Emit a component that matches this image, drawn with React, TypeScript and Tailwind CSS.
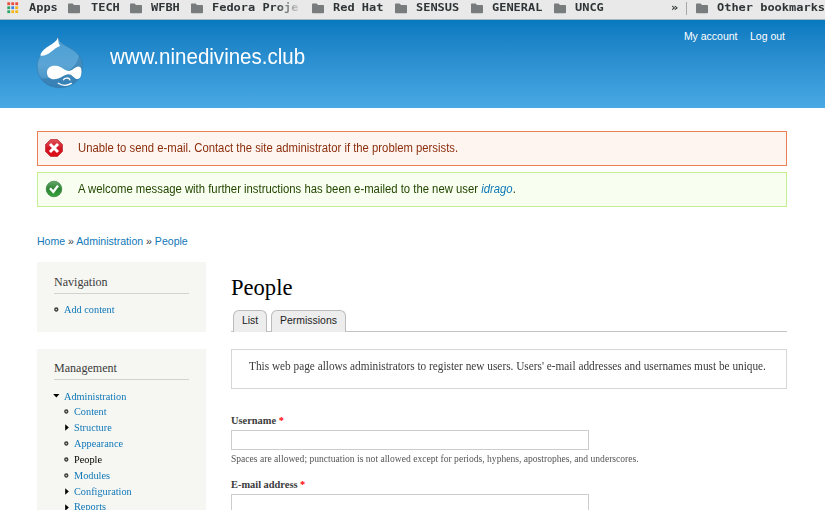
import type { ReactNode } from "react";

const SANS = "font-['Liberation_Sans',Arial,sans-serif]";
const LINK = "text-[#0f78b8]";

function Folder() {
  return (
    <svg className="block h-[11px] w-3 shrink-0" viewBox="0 0 12 11">
      <path d="M0 1.2Q0 .4 .8 .4H4.6L6 1.9H11.2Q12 1.9 12 2.7V9.5Q12 10.3 11.2 10.3H.8Q0 10.3 0 9.5Z" fill="#797c7c" />
    </svg>
  );
}

function PixelText({ children }: { children: ReactNode }) {
  return (
    <span className="block w-max origin-left scale-x-[1.235] whitespace-pre font-['DejaVu_Sans_Mono',monospace] text-[9.7px] leading-[15px] font-bold text-[#2f3536]">
      {children}
    </span>
  );
}

const bookmarks = [
  { name: "TECH", width: "w-[62px]", gap: "gap-[11px]" },
  { name: "WFBH", width: "w-[61px]", gap: "gap-[9px]" },
  { name: "Fedora Proje", width: "w-[121px]", gap: "gap-[9px]", fade: true },
  { name: "Red Hat", width: "w-[83px]", gap: "gap-[9px]" },
  { name: "SENSUS", width: "w-[76px]", gap: "gap-[9px]" },
  { name: "GENERAL", width: "w-[83px]", gap: "gap-[9px]" },
  { name: "UNCG", width: "w-[117px]", gap: "gap-[9px]" },
];

function AppsGrid() {
  const colors = ["#e94b3c", "#e94b3c", "#e94b3c", "#2fa366", "#3b82e8", "#f4b619", "#2fa366", "#f4b619", "#f4b619"];
  return (
    <svg className="block h-3 w-[12px]" viewBox="0 0 12 12">
      {colors.map((c, i) => (
        <rect key={i} x={(i % 3) * 4 + 0.3} y={Math.floor(i / 3) * 4 + 0.3} width="2.8" height="2.8" fill={c} />
      ))}
    </svg>
  );
}

function BookmarkBar() {
  return (
    <div className="flex h-5 w-[825px] items-start overflow-hidden border-b border-[#a9b9c0] bg-[#e9e9e9]">
      <div className="flex w-[68px] shrink-0 gap-[9.5px] pl-[7px]">
        <div className="pt-[2px]"><AppsGrid /></div>
        <PixelText>Apps</PixelText>
      </div>
      {bookmarks.map((b) => (
        <div key={b.name} className={`flex shrink-0 ${b.width} ${b.gap}`}>
          <div className="pt-[3px]"><Folder /></div>
          <div className={b.fade ? "w-[90px] [mask-image:linear-gradient(to_right,black_64px,transparent_90px)]" : ""}>
            <PixelText>{b.name}</PixelText>
          </div>
        </div>
      ))}
      <div className="w-[15px] shrink-0"><PixelText>»</PixelText></div>
      <div className="mt-[2px] mr-[9px] h-[13px] w-px shrink-0 bg-[#a5a8a8]" />
      <div className="flex shrink-0 gap-[9px]">
        <div className="pt-[3px]"><Folder /></div>
        <PixelText>Other bookmarks</PixelText>
      </div>
    </div>
  );
}

function Druplicon() {
  const body =
    "M22 1C22.500 6 28 9 34 12C42 16.500 46.500 22.500 46.500 30.500C46.500 43 37 51.700 24 51.700C11 51.700 1.200 43 1.200 30.500C1.200 21 7 15 14 10.800C19 8 21.500 5 22 1Z";
  return (
    <svg className="block h-[53px] w-[48px]" viewBox="0 0 48 53">
      <defs>
        <linearGradient id="drop" x1="0" y1="0" x2="0" y2="1">
          <stop offset="0" stopColor="#4a9fd5" />
          <stop offset=".55" stopColor="#5ba5d5" />
          <stop offset=".8" stopColor="#4c97ca" />
          <stop offset="1" stopColor="#4590c4" />
        </linearGradient>
        <clipPath id="dropShape"><path d={body} /></clipPath>
      </defs>
      <g clipPath="url(#dropShape)">
        <rect width="48" height="53" fill="url(#drop)" />
        <path d="M43 19C42 26 39 30 32 35.500C26 40 22 42.500 1 42.500V53H48V19Z" fill="#226a9f" opacity=".42" />
      </g>
      <path d={body} fill="none" stroke="#3279aa" strokeWidth=".8" opacity=".7" />
      <path d="M22 1.500C20.500 5.500 17 7.500 12.500 10.300C8 13.300 4.800 16 4.400 19.500C7 20.500 11 19 14.500 16.300C18.500 13.100 20 11.500 24 10C22.200 7 22.200 4 22 1.500Z" fill="#fff" />
      <path d="M11 36.500C11 31.500 15 29.300 20 29.800C25 30.300 29 35 33 35C36 35 39 30.700 42.500 30.500C45 30.500 46 33.500 45.300 38C44.800 42 43 43.500 40.500 43C37.500 42 36 38.300 32.500 38.300C28.500 38.300 24 43.300 18 43.300C14 43.300 11 41 11 36.500Z" fill="#fff" />
      <path d="M27.500 43.700C28.500 41.700 33 41.300 34 43.900M22.300 47.300C26 50 31.500 50 35.300 47.400" fill="none" stroke="#fff" strokeWidth="1.400" strokeLinecap="round" />
    </svg>
  );
}

function ErrorIcon() {
  return (
    <svg className="-mt-[1px] block h-[18px] w-[18px] shrink-0" viewBox="0 0 18 18">
      <defs>
        <linearGradient id="red" x1="0" y1="0" x2="0" y2="1">
          <stop offset="0" stopColor="#df5359" />
          <stop offset=".5" stopColor="#d01827" />
          <stop offset="1" stopColor="#e00b13" />
        </linearGradient>
      </defs>
      <path d="M5.500 .5H12.500L17.500 5.500V12.500L12.500 17.500H5.500L.5 12.500V5.500Z" fill="url(#red)" stroke="#bd353b" strokeWidth=".8" strokeLinejoin="round" />
      <path d="M6 6L12 12M12 6L6 12" stroke="#fff" strokeWidth="2.900" strokeLinecap="square" />
    </svg>
  );
}

function OkIcon() {
  return (
    <svg className="-mt-[2px] block h-[18px] w-[18px] shrink-0" viewBox="0 0 18 18">
      <defs>
        <linearGradient id="green" x1="0" y1="0" x2="0" y2="1">
          <stop offset="0" stopColor="#68a66b" />
          <stop offset=".5" stopColor="#2c8433" />
          <stop offset="1" stopColor="#37a63c" />
        </linearGradient>
      </defs>
      <circle cx="9" cy="9" r="7.800" fill="url(#green)" stroke="#397d40" strokeWidth=".7" />
      <path d="M5 8.200L8.300 11.800L13 5.600" fill="none" stroke="#fff" strokeWidth="2.400" />
    </svg>
  );
}

function Bullet({ kind }: { kind: "leaf" | "closed" | "open" }) {
  return (
    <svg className="block h-[7px] w-[7px] shrink-0 overflow-visible" viewBox="0 0 7 7">
      {kind === "leaf" && <circle cx="2.300" cy="3.500" r="1.500" fill="#ccc" stroke="#3a3a3a" strokeWidth="1.300" />}
      {kind === "closed" && <path d="M1.200 .2L4.800 3.500L1.200 6.800Z" fill="#000" />}
      {kind === "open" && <path d="M-.8 1H5.400L2.300 4.400Z" fill="#000" />}
    </svg>
  );
}

type Item = { label: string; kind: "leaf" | "closed"; active?: boolean };
const adminItems: Item[] = [
  { label: "Content", kind: "leaf" },
  { label: "Structure", kind: "closed" },
  { label: "Appearance", kind: "leaf" },
  { label: "People", kind: "leaf", active: true },
  { label: "Modules", kind: "leaf" },
  { label: "Configuration", kind: "closed" },
  { label: "Reports", kind: "closed" },
];

function BlockTitle({ children }: { children: ReactNode }) {
  return <h2 className="h-[19px] border-b border-[#d2d2cf] text-[12.05px] leading-[14px]">{children}</h2>;
}

function MenuLink({ children, active }: { children: ReactNode; active?: boolean }) {
  return (
    <a className={`block origin-left scale-x-[0.945] text-[10.9px] ${active ? "text-black" : LINK}`}>{children}</a>
  );
}

function Field({ label }: { label: string }) {
  return (
    <>
      <label className="block h-[16px] text-[10.4px] leading-[14px] font-bold">
        {label} <span className="text-[#f00]">*</span>
      </label>
      <input className="block h-[20px] w-[358px] border border-[#ccc] bg-white outline-none" />
    </>
  );
}

export default function App() {
  return (
    <div className="h-[510px] w-[825px] overflow-hidden bg-white font-['Liberation_Serif','Times_New_Roman',serif] text-[#3b3b3b]">
      <BookmarkBar />
      <header className={`flex h-[88px] items-start bg-linear-to-b from-[#0779bf] to-[#48a9e4] text-[#fffeff] ${SANS}`}>
        <div className="pt-4 pl-[35.5px]"><Druplicon /></div>
        <div className="mt-[25px] ml-[26px] origin-left scale-x-[0.96] text-[21.4px] leading-6">www.ninedivines.club</div>
        <nav className="mt-[10px] mr-[40px] ml-auto flex gap-[12.5px] text-[10.49px] leading-[14px]">
          <a>My account</a>
          <a>Log out</a>
        </nav>
      </header>

      <div className={`mt-[23px] ml-[37px] flex w-[750px] flex-col gap-[6px] text-[12px] ${SANS}`}>
        <div className="flex h-[35px] items-center gap-[15px] border border-[#ec8055] bg-[#fef5f1] pl-[7px] text-[#8c2e0b]">
          <ErrorIcon />
          <span className="-mt-[2px] origin-left scale-x-[0.942] whitespace-nowrap">Unable to send e-mail. Contact the site administrator if the problem persists.</span>
        </div>
        <div className="flex h-[35px] items-center gap-[15px] border border-[#c4ef90] bg-[#f8fff0] pl-[7px] text-[#234600]">
          <OkIcon />
          <span className="-mt-[2px] origin-left scale-x-[0.943] whitespace-nowrap">A welcome message with further instructions has been e-mailed to the new user <em className={LINK}>idrago</em>.</span>
        </div>
      </div>

      <div className={`mt-[27px] ml-[37px] h-[28px] text-[10.55px] leading-[14px] ${SANS}`}>
        <a className={LINK}>Home</a> » <a className={LINK}>Administration</a> » <a className={LINK}>People</a>
      </div>

      <div className="flex items-start gap-[25px] pl-[37px]">
        <aside className="flex w-[169px] shrink-0 flex-col gap-[17px]">
          <section className="h-[70px] bg-[#f6f6f2] px-[17px] pt-[13px]">
            <BlockTitle>Navigation</BlockTitle>
            <div className="mt-[8px] flex items-center gap-[3px] leading-[14px]">
              <Bullet kind="leaf" />
              <MenuLink>Add content</MenuLink>
            </div>
          </section>
          <section className="h-[180px] bg-[#f6f6f2] px-[17px] pt-[12px]">
            <BlockTitle>Management</BlockTitle>
            <div className="mt-[8px] flex h-[16px] items-center gap-[3px] leading-[14px]">
              <Bullet kind="open" />
              <MenuLink>Administration</MenuLink>
            </div>
            <ul className="pl-[10px] leading-[15.9px]">
              {adminItems.map((item) => (
                <li key={item.label} className="flex items-center gap-[3px]">
                  <Bullet kind={item.kind} />
                  <MenuLink active={item.active}>{item.label}</MenuLink>
                </li>
              ))}
            </ul>
          </section>
        </aside>

        <main className="w-[556px]">
          <h1 className="pt-[12px] text-[22.58px] leading-[27px] text-black">People</h1>
          <div className={`mt-[9px] flex h-[22px] gap-1 border-b border-[#c4c4c4] pl-[2px] text-[10.45px] leading-[20px] text-[#222] ${SANS}`}>
            <a className="h-[22px] w-[34px] rounded-t-[6px] border border-b-0 border-[#bbb] bg-[#ededed] text-center">List</a>
            <a className="h-[22px] w-[75px] rounded-t-[6px] border border-b-0 border-[#bbb] bg-[#ededed] text-center">Permissions</a>
          </div>
          <div className="mt-[17px] h-[40px] border border-[#d3d7d9] pt-[8px] pl-[16.500px]">
            <p className="w-max origin-left scale-x-[0.941] text-[12px] leading-[16px] whitespace-nowrap">
              This web page allows administrators to register new users. Users' e-mail addresses and usernames must be unique.
            </p>
          </div>
          <form className="pt-[25px]">
            <Field label="Username" />
            <p className="h-[28px] w-max origin-left scale-x-[0.94] pt-[2px] text-[10.2px] leading-[13px] whitespace-nowrap text-[#555]">
              Spaces are allowed; punctuation is not allowed except for periods, hyphens, apostrophes, and underscores.
            </p>
            <Field label="E-mail address" />
          </form>
        </main>
      </div>
    </div>
  );
}
